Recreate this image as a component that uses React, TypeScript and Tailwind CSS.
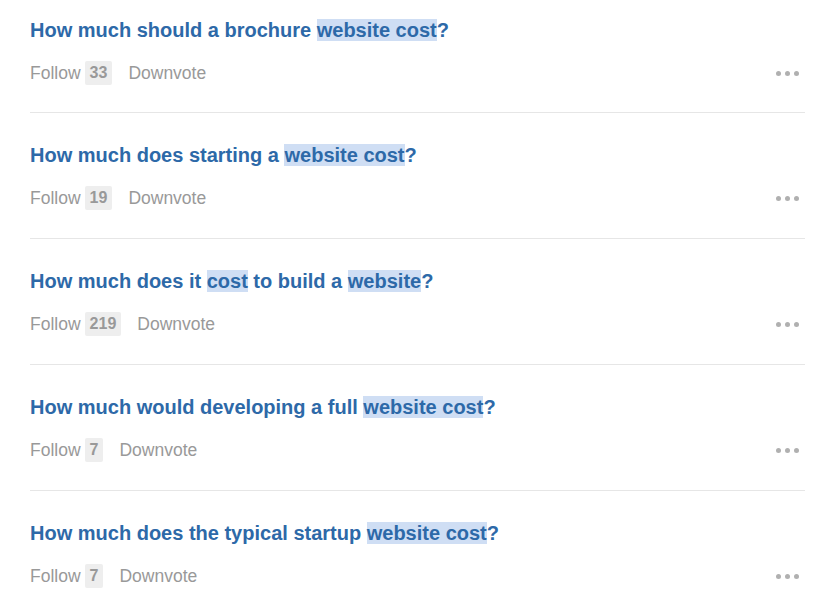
import React from "react";

type Part = { t: string; h?: boolean };
const items: { title: Part[]; count: string }[] = [
  { title: [{ t: "How much should a brochure " }, { t: "website cost", h: true }, { t: "?" }], count: "33" },
  { title: [{ t: "How much does starting a " }, { t: "website cost", h: true }, { t: "?" }], count: "19" },
  { title: [{ t: "How much does it " }, { t: "cost", h: true }, { t: " to build a " }, { t: "website", h: true }, { t: "?" }], count: "219" },
  { title: [{ t: "How much would developing a full " }, { t: "website cost", h: true }, { t: "?" }], count: "7" },
  { title: [{ t: "How much does the typical startup " }, { t: "website cost", h: true }, { t: "?" }], count: "7" },
];

export default function App() {
  return (
    <div className="w-[831px] h-[615px] overflow-hidden bg-white pt-[18px] pl-[30px] pr-[26px]" style={{ fontFamily: '"Liberation Sans", Arial, sans-serif' }}>
      {items.map((it, i) => (
        <div key={i} className={`${i === 0 ? "pt-0" : "pt-[30px]"} ${i === 0 ? "pb-[27px]" : "pb-[28px]"} ${i < items.length - 1 ? "border-b border-[#e6e6e6]" : ""}`}>
          <div className="text-[20px] leading-[24px] font-bold text-[#2d69a8]">
            {it.title.map((p, j) =>
              p.h ? (
                <span key={j} className="bg-[#cfdef4]">{p.t}</span>
              ) : (
                <span key={j}>{p.t}</span>
              )
            )}
          </div>
          <div className="mt-[19px] flex items-center h-[24px] text-[17.5px] text-[#999999]">
            <span>Follow</span>
            <span className="ml-[4px] px-[5px] h-[24px] flex items-center bg-[#eeeeee] rounded-[2px] font-bold text-[16px] text-[#999999]">{it.count}</span>
            <span className="ml-[16px]">Downvote</span>
            <div className="ml-auto mr-[6px] flex gap-[4px]">
              <span className="w-[5px] h-[5px] rounded-full bg-[#b0b0b0]" />
              <span className="w-[5px] h-[5px] rounded-full bg-[#b0b0b0]" />
              <span className="w-[5px] h-[5px] rounded-full bg-[#b0b0b0]" />
            </div>
          </div>
        </div>
      ))}
    </div>
  );
}
